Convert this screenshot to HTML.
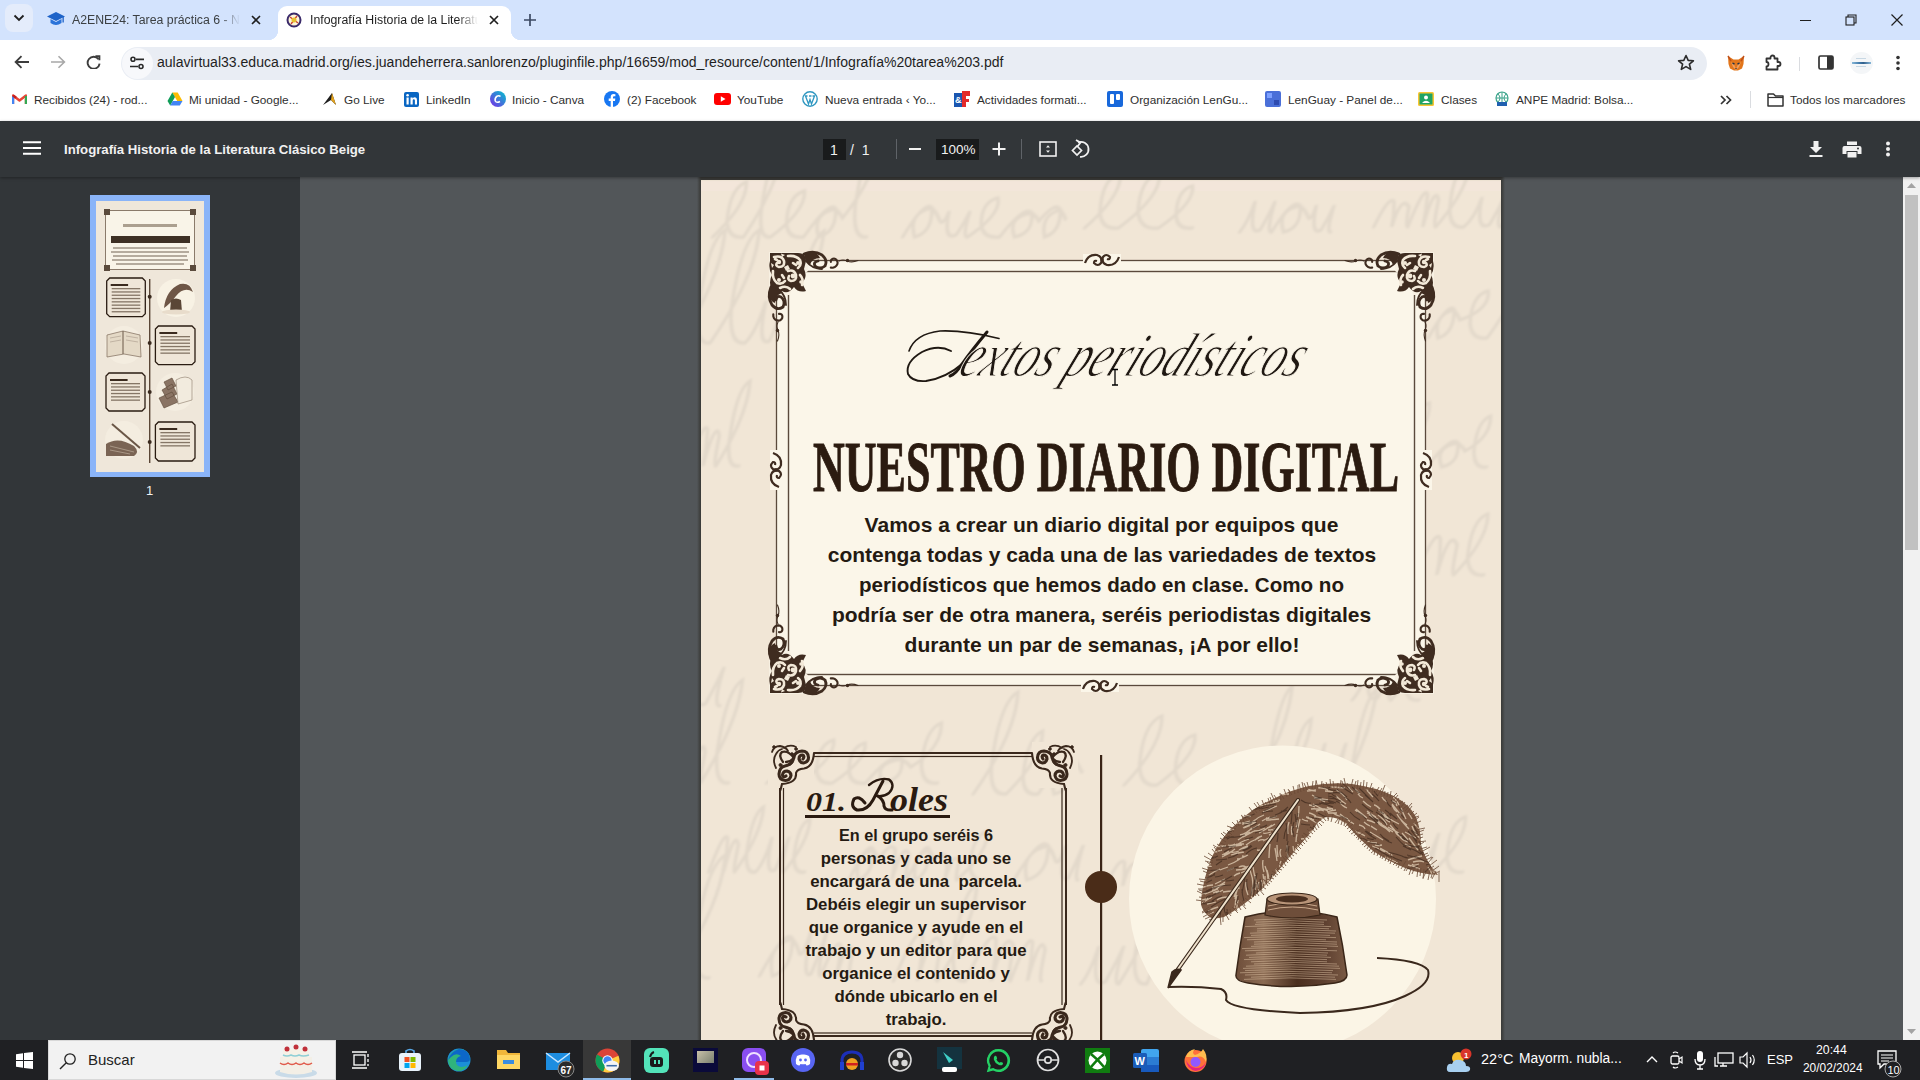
<!DOCTYPE html>
<html><head><meta charset="utf-8">
<style>
*{margin:0;padding:0;box-sizing:border-box}
html,body{width:1920px;height:1080px;overflow:hidden;font-family:"Liberation Sans",sans-serif;background:#525659}
.abs{position:absolute}
svg{display:block}
#tabs{position:absolute;left:0;top:0;width:1920px;height:40px;background:#d3e3fd}
#toolbar{position:absolute;left:0;top:40px;width:1920px;height:42px;background:#fff}
#bookmarks{position:absolute;left:0;top:82px;width:1920px;height:39px;background:#fff}
#pdfbar{position:absolute;left:0;top:121px;width:1920px;height:56px;background:#323639;z-index:2;box-shadow:0 1px 3px rgba(0,0,0,.35)}
#sidebar{position:absolute;left:0;top:177px;width:300px;height:863px;background:#323639}
#viewer{position:absolute;left:300px;top:177px;width:1603px;height:863px;background:#525659}
#scroll{position:absolute;left:1903px;top:177px;width:17px;height:863px;background:#f1f1f1}
#taskbar{position:absolute;left:0;top:1040px;width:1920px;height:40px;background:#1f2023;z-index:3}
.t{position:absolute;white-space:nowrap}
.bm{top:11px;font-size:11.8px;color:#2e2e2e}
</style></head><body>
<div id="tabs">
  <div class="abs" style="left:5px;top:4px;width:28px;height:28px;border-radius:8px;background:#e4ecfb"></div>
  <svg class="abs" style="left:13px;top:14px" width="12" height="8" viewBox="0 0 12 8"><path d="M1.5 1.5 L6 6 L10.5 1.5" stroke="#1f1f1f" stroke-width="1.8" fill="none"/></svg>
  <!-- tab1 -->
  <svg class="abs" style="left:47px;top:12px" width="18" height="15" viewBox="0 0 18 15"><path d="M9 0 L18 4.5 L9 9 L0 4.5Z" fill="#1e63c8"/><path d="M3.5 7 V11 Q9 15 14.5 11 V7 L9 10 Z" fill="#2a73d9"/><rect x="15.5" y="4.5" width="1.3" height="6" fill="#1e63c8"/></svg>
  <div class="t" style="left:72px;top:13px;font-size:12.3px;color:#3c4043;width:168px;overflow:hidden;-webkit-mask-image:linear-gradient(90deg,#000 88%,transparent)">A2ENE24: Tarea práctica 6 - Nivel</div>
  <svg class="abs" style="left:251px;top:15px" width="10" height="10" viewBox="0 0 10 10"><path d="M1 1L9 9M9 1L1 9" stroke="#1f1f1f" stroke-width="1.6"/></svg>
  <!-- active tab -->
  <div class="abs" style="left:278px;top:6px;width:233px;height:36px;background:#fff;border-radius:9px 9px 0 0"></div>
  <div class="abs" style="left:268px;top:30px;width:10px;height:10px;background:radial-gradient(circle at 0 0,#d3e3fd 10px,#fff 10.5px)"></div>
  <div class="abs" style="left:511px;top:30px;width:10px;height:10px;background:radial-gradient(circle at 100% 0,#d3e3fd 10px,#fff 10.5px)"></div>
  <svg class="abs" style="left:286px;top:12px" width="16" height="16" viewBox="0 0 16 16"><circle cx="8" cy="8" r="6.5" stroke="#3a2a6a" stroke-width="2" fill="#fff7d8"/><path d="M4 5 L12 11 M5 12 L11 4" stroke="#c43" stroke-width="1.4"/><circle cx="8" cy="8" r="2.5" fill="#e8c030"/></svg>
  <div class="t" style="left:310px;top:13px;font-size:12.3px;color:#1f1f1f;width:168px;overflow:hidden;-webkit-mask-image:linear-gradient(90deg,#000 88%,transparent)">Infografía Historia de la Literatura</div>
  <svg class="abs" style="left:489px;top:15px" width="10" height="10" viewBox="0 0 10 10"><path d="M1 1L9 9M9 1L1 9" stroke="#1f1f1f" stroke-width="1.7"/></svg>
  <svg class="abs" style="left:523px;top:13px" width="14" height="14" viewBox="0 0 14 14"><path d="M7 1V13M1 7H13" stroke="#3c4a63" stroke-width="1.7"/></svg>
  <!-- window controls -->
  <div class="abs" style="left:1800px;top:20px;width:11px;height:1px;background:#1f1f1f"></div>
  <svg class="abs" style="left:1845px;top:14px" width="12" height="12" viewBox="0 0 12 12"><rect x="1" y="3" width="8" height="8" stroke="#1f1f1f" fill="none" stroke-width="1.1"/><path d="M3 3V1H11V9H9" stroke="#1f1f1f" fill="none" stroke-width="1.1"/></svg>
  <svg class="abs" style="left:1891px;top:14px" width="12" height="12" viewBox="0 0 12 12"><path d="M0.5 0.5L11.5 11.5M11.5 0.5L0.5 11.5" stroke="#1f1f1f" stroke-width="1.2"/></svg>
</div>
<div id="toolbar">
  <svg class="abs" style="left:14px;top:15px" width="16" height="14" viewBox="0 0 16 14"><path d="M15 7H2M7.5 1.2L1.6 7L7.5 12.8" stroke="#3c3c3c" stroke-width="1.8" fill="none"/></svg>
  <svg class="abs" style="left:50px;top:15px" width="16" height="14" viewBox="0 0 16 14"><path d="M1 7H14M8.5 1.2L14.4 7L8.5 12.8" stroke="#a8a8a8" stroke-width="1.6" fill="none"/></svg>
  <svg class="abs" style="left:86px;top:15px" width="16" height="14" viewBox="0 0 16 14"><path d="M12.5 4.2 A6 6 0 1 0 13.6 8.6" stroke="#3c3c3c" stroke-width="1.9" fill="none"/><path d="M9.4 1.2H13.4V5.2" stroke="#3c3c3c" stroke-width="1.9" fill="none"/></svg>
  <div class="abs" style="left:121px;top:7px;width:1586px;height:33px;border-radius:17px;background:#e9edf4"></div>
  <div class="abs" style="left:122px;top:8px;width:31px;height:31px;border-radius:16px;background:#f7f8fb"></div>
  <svg class="abs" style="left:129px;top:16px" width="16" height="14" viewBox="0 0 16 14"><circle cx="4" cy="3.3" r="2" stroke="#2a2a2a" stroke-width="1.6" fill="none"/><path d="M7 3.3H15M1 10.5H9" stroke="#2a2a2a" stroke-width="1.7"/><circle cx="12" cy="10.5" r="2" stroke="#2a2a2a" stroke-width="1.6" fill="none"/></svg>
  <div class="t" style="left:157px;top:14px;font-size:14.05px;color:#1f1f1f">aulavirtual33.educa.madrid.org/ies.juandeherrera.sanlorenzo/pluginfile.php/16659/mod_resource/content/1/Infografía%20tarea%203.pdf</div>
  <svg class="abs" style="left:1677px;top:14px" width="18" height="18" viewBox="0 0 18 18"><path d="M9 1.5L11.2 6.4L16.4 6.8L12.4 10.2L13.7 15.4L9 12.6L4.3 15.4L5.6 10.2L1.6 6.8L6.8 6.4Z" stroke="#2c2c2c" stroke-width="1.6" fill="none" stroke-linejoin="round"/></svg>
  <svg class="abs" style="left:1727px;top:15px" width="18" height="16" viewBox="0 0 18 16"><path d="M1 1L6.5 4.5H11.5L17 1L16.5 9L15 13.5L11 15.5H7L3 13.5L1.5 9Z" fill="#e2761b"/><path d="M4 7L7 9.5L9 14L11 9.5L14 7L12 12L9 15L6 12Z" fill="#f0a060"/><path d="M5.5 8.2L7.5 9M12.5 8.2L10.5 9" stroke="#233447" stroke-width="1.4"/><path d="M8 13H10L9 14.2Z" fill="#233447"/><path d="M1 1L4 6M17 1L14 6" stroke="#c0511a" stroke-width="1.5"/></svg>
  <svg class="abs" style="left:1764px;top:14px" width="18" height="18" viewBox="0 0 18 18"><path d="M2.5 4.5H6.5V3.5A2 2 0 0 1 10.5 3.5V4.5H13.5V8H14.5A2 2 0 0 1 14.5 12H13.5V15.5H2.5V12.5Q4.5 12.5 4.5 10.25Q4.5 8 2.5 8Z" stroke="#333" stroke-width="1.8" fill="none" stroke-linejoin="round"/></svg>
  <div class="abs" style="left:1799px;top:17px;width:1px;height:14px;background:#dadce0"></div>
  <svg class="abs" style="left:1818px;top:15px" width="16" height="15" viewBox="0 0 16 15"><rect x="1" y="1" width="14" height="13" rx="1.5" stroke="#333" stroke-width="1.7" fill="none"/><rect x="9" y="1" width="6" height="13" fill="#333"/></svg>
  <div class="abs" style="left:1850px;top:12px;width:23px;height:22px;border-radius:50%;background:#f4f6f8"></div>
  <div class="abs" style="left:1852px;top:22px;width:19px;height:2px;background:linear-gradient(90deg,#7ab0d4,#2a6aa0 40%,#1d4f80 60%,#7ab0d4);opacity:.9"></div><div class="abs" style="left:1856px;top:18px;width:10px;height:1px;background:#c8d8e4"></div><div class="abs" style="left:1856px;top:26px;width:10px;height:1px;background:#c8d8e4"></div>
  <svg class="abs" style="left:1895px;top:15px" width="6" height="16" viewBox="0 0 6 16"><circle cx="3" cy="2.5" r="1.8" fill="#333"/><circle cx="3" cy="8" r="1.8" fill="#333"/><circle cx="3" cy="13.5" r="1.8" fill="#333"/></svg>
</div>
<div id="bookmarks">
  <svg class="abs" style="left:12px;top:11px" width="15" height="12" viewBox="0 0 15 12"><path d="M1 11V2.5L7.5 7.5L14 2.5V11" stroke="#ea4335" stroke-width="2.4" fill="none" stroke-linejoin="round"/><path d="M1 11V3" stroke="#4285f4" stroke-width="2.4"/><path d="M14 11V3" stroke="#34a853" stroke-width="2.4"/><path d="M1 2.5L4 4.8" stroke="#c5221f" stroke-width="2.4"/></svg>
  <div class="t bm" style="left:34px">Recibidos (24) - rod...</div>
  <svg class="abs" style="left:167px;top:10px" width="16" height="14" viewBox="0 0 16 14"><path d="M5.3 0.5H10.7L15.5 9H10.2Z" fill="#fbbc04"/><path d="M5.3 0.5L0.5 9L3.2 13.5L8 5Z" fill="#0f9d58"/><path d="M3.2 13.5H12.8L15.5 9H5.8Z" fill="#4285f4"/></svg>
  <div class="t bm" style="left:189px">Mi unidad - Google...</div>
  <svg class="abs" style="left:322px;top:10px" width="15" height="14" viewBox="0 0 15 14"><path d="M1 13L10 1L14 13L9 8Z" fill="#1f1f1f"/><path d="M9 8L14 13L10 1Z" fill="#e3a21a"/></svg>
  <div class="t bm" style="left:344px">Go Live</div>
  <svg class="abs" style="left:404px;top:10px" width="15" height="15" viewBox="0 0 15 15"><rect width="15" height="15" rx="2" fill="#0a66c2"/><rect x="2.5" y="5.5" width="2.2" height="7" fill="#fff"/><circle cx="3.6" cy="3.3" r="1.3" fill="#fff"/><path d="M6.5 12.5V5.5H8.6V6.6Q9.4 5.3 11 5.3Q13 5.4 13 8V12.5H10.9V8.6Q10.9 7.2 9.8 7.2Q8.7 7.2 8.7 8.6V12.5Z" fill="#fff"/></svg>
  <div class="t bm" style="left:426px">LinkedIn</div>
  <svg class="abs" style="left:490px;top:9px" width="16" height="16" viewBox="0 0 16 16"><defs><linearGradient id="cv" x1="0" y1="1" x2="1" y2="0"><stop offset="0" stop-color="#7d2ae8"/><stop offset="1" stop-color="#00c4cc"/></linearGradient></defs><circle cx="8" cy="8" r="8" fill="url(#cv)"/><path d="M10.5 5.5Q9 4 6.8 5.3Q4.5 7 5.3 10Q6.5 12.3 10 10.5" stroke="#fff" stroke-width="1.6" fill="none"/></svg>
  <div class="t bm" style="left:512px">Inicio - Canva</div>
  <svg class="abs" style="left:604px;top:9px" width="16" height="16" viewBox="0 0 16 16"><circle cx="8" cy="8" r="8" fill="#1877f2"/><path d="M9 16V10H11L11.3 7.6H9V6.2Q9 5.3 10 5.3H11.4V3.2Q10.6 3 9.6 3Q6.7 3 6.7 6V7.6H4.7V10H6.7V16Z" fill="#fff"/></svg>
  <div class="t bm" style="left:627px">(2) Facebook</div>
  <svg class="abs" style="left:714px;top:11px" width="17" height="12" viewBox="0 0 17 12"><rect width="17" height="12" rx="3" fill="#ff0000"/><path d="M6.8 3.2L11.5 6L6.8 8.8Z" fill="#fff"/></svg>
  <div class="t bm" style="left:737px">YouTube</div>
  <svg class="abs" style="left:802px;top:9px" width="16" height="16" viewBox="0 0 16 16"><circle cx="8" cy="8" r="7.2" stroke="#2f97c1" stroke-width="1.4" fill="#fff"/><path d="M3.5 5L6.5 13L8 8.5L9.5 13L12.5 5M3 5H5.5M7 5H9.5M10.5 5H13" stroke="#2f97c1" stroke-width="1.3" fill="none"/></svg>
  <div class="t bm" style="left:825px">Nueva entrada ‹ Yo...</div>
  <svg class="abs" style="left:954px;top:9px" width="16" height="16" viewBox="0 0 16 16"><rect x="0" y="0" width="16" height="16" fill="#fff"/><path d="M0 2H8V16H0Z" fill="#1a56b0"/><path d="M8 0H16V5H12V8H15V11H12V16H8Z" fill="#e32b2b"/><text x="1" y="12" font-size="9" fill="#fff" font-family="Liberation Sans" font-weight="bold">&amp;</text></svg>
  <div class="t bm" style="left:977px">Actividades formati...</div>
  <svg class="abs" style="left:1107px;top:9px" width="16" height="16" viewBox="0 0 16 16"><rect width="16" height="16" rx="2" fill="#1868db"/><rect x="3" y="3" width="4" height="10" rx="1" fill="#fff"/><rect x="9" y="3" width="4" height="6" rx="1" fill="#fff"/></svg>
  <div class="t bm" style="left:1130px">Organización LenGu...</div>
  <svg class="abs" style="left:1265px;top:9px" width="16" height="16" viewBox="0 0 16 16"><rect width="16" height="16" rx="2" fill="#4a6fd8"/><rect x="2" y="2" width="5" height="5" fill="#7da0ff"/><rect x="9" y="9" width="5" height="5" fill="#2d4ab0"/></svg>
  <div class="t bm" style="left:1288px">LenGuay - Panel de...</div>
  <svg class="abs" style="left:1418px;top:10px" width="16" height="14" viewBox="0 0 16 14"><rect width="16" height="14" rx="1.5" fill="#f9c633"/><rect x="1.5" y="1.5" width="13" height="11" fill="#20a464"/><circle cx="8" cy="5.5" r="2" fill="#fff"/><path d="M4 11Q8 6.5 12 11Z" fill="#fff"/></svg>
  <div class="t bm" style="left:1441px">Clases</div>
  <svg class="abs" style="left:1494px;top:9px" width="16" height="16" viewBox="0 0 16 16"><circle cx="8" cy="7" r="6" stroke="#3aa38a" stroke-width="1.2" fill="none"/><path d="M2 7H14M8 1V13M4 3Q8 7 4 11M12 3Q8 7 12 11" stroke="#3aa38a" stroke-width="1" fill="none"/><rect x="3" y="11" width="10" height="4" fill="#2060b0"/></svg>
  <div class="t bm" style="left:1516px">ANPE Madrid: Bolsa...</div>
  <svg class="abs" style="left:1720px;top:13px" width="12" height="10" viewBox="0 0 12 10"><path d="M1 1L5 5L1 9M6.5 1L10.5 5L6.5 9" stroke="#333" stroke-width="1.7" fill="none"/></svg>
  <div class="abs" style="left:1750px;top:9px;width:1px;height:17px;background:#dadce0"></div>
  <svg class="abs" style="left:1767px;top:10px" width="17" height="15" viewBox="0 0 17 15"><path d="M1 2H6.5L8.5 4H16V14H1Z" stroke="#333" stroke-width="1.5" fill="none" stroke-linejoin="round"/><path d="M1 5.5H16" stroke="#333" stroke-width="1.2"/></svg>
  <div class="t bm" style="left:1790px">Todos los marcadores</div>
</div>
<div id="pdfbar">
  <svg class="abs" style="left:23px;top:20px" width="18" height="14" viewBox="0 0 18 14"><path d="M0 1.2H18M0 7H18M0 12.8H18" stroke="#fff" stroke-width="2"/></svg>
  <div class="t" style="left:64px;top:21px;font-size:13.2px;font-weight:bold;color:#f1f1f1">Infografía Historia de la Literatura Clásico Beige</div>
  <div class="abs" style="left:823px;top:18px;width:23px;height:21px;background:#191b1c"></div>
  <div class="t" style="left:830px;top:21px;font-size:14px;color:#f1f1f1">1</div>
  <div class="t" style="left:850px;top:21px;font-size:14px;color:#f1f1f1">/&nbsp;&nbsp;1</div>
  <div class="abs" style="left:896px;top:18px;width:1px;height:20px;background:#5f6368"></div>
  <div class="abs" style="left:909px;top:27px;width:12px;height:2px;background:#f1f1f1"></div>
  <div class="abs" style="left:936px;top:18px;width:43px;height:21px;background:#191b1c"></div>
  <div class="t" style="left:941px;top:21px;font-size:13.5px;color:#f1f1f1">100%</div>
  <svg class="abs" style="left:992px;top:21px" width="14" height="14" viewBox="0 0 14 14"><path d="M7 0.5V13.5M0.5 7H13.5" stroke="#f1f1f1" stroke-width="2"/></svg>
  <div class="abs" style="left:1021px;top:18px;width:1px;height:20px;background:#5f6368"></div>
  <svg class="abs" style="left:1039px;top:20px" width="18" height="16" viewBox="0 0 18 16"><rect x="1" y="1" width="16" height="14" stroke="#f1f1f1" stroke-width="1.6" fill="none"/><path d="M7 6.5L9 4.2L11 6.5ZM7 9.5L9 11.8L11 9.5Z" fill="#f1f1f1"/></svg>
  <svg class="abs" style="left:1070px;top:138px;top:17px" width="22" height="22" viewBox="0 0 22 22"><path d="M8 4.5 A7.5 7.5 0 1 1 10 18.8" stroke="#f1f1f1" stroke-width="1.8" fill="none"/><path d="M6 2 L10.5 4.6 L7.5 8.5" stroke="#f1f1f1" stroke-width="1.8" fill="none"/><path d="M7 8 L11.5 12.5 L7 17 L2.5 12.5 Z" stroke="#f1f1f1" stroke-width="1.7" fill="none"/></svg>
  <svg class="abs" style="left:1808px;top:19px" width="16" height="18" viewBox="0 0 16 18"><path d="M5.5 1H10.5V7H14L8 13L2 7H5.5Z" fill="#f1f1f1"/><rect x="1.5" y="15" width="13" height="2" fill="#f1f1f1"/></svg>
  <svg class="abs" style="left:1842px;top:20px" width="20" height="17" viewBox="0 0 20 17"><rect x="5" y="0.5" width="10" height="3.5" fill="#f1f1f1"/><path d="M2.5 5H17.5Q19.5 5 19.5 7V13H15.5V10H4.5V13H0.5V7Q0.5 5 2.5 5Z" fill="#f1f1f1"/><rect x="5.5" y="11" width="9" height="5.5" fill="#f1f1f1"/><circle cx="16" cy="7.5" r="1" fill="#323639"/></svg>
  <svg class="abs" style="left:1885px;top:20px" width="6" height="16" viewBox="0 0 6 16"><circle cx="3" cy="2.5" r="2" fill="#f1f1f1"/><circle cx="3" cy="8" r="2" fill="#f1f1f1"/><circle cx="3" cy="13.5" r="2" fill="#f1f1f1"/></svg>
</div>
<div id="sidebar">
  <div class="abs" style="left:90px;top:18px;width:120px;height:282px;background:#8ab4f8"></div>
  <svg class="abs" style="left:96px;top:24px" width="108" height="271" viewBox="96 201 108 271">
<rect x="96" y="201" width="108" height="271" fill="#efe7da"/>
<rect x="105.5" y="210.5" width="89" height="59" fill="#f9f4e8" stroke="#8a7a6a" stroke-width="1"/>
<g fill="#5a4a3c"><rect x="104" y="209" width="6" height="6"/><rect x="190" y="209" width="6" height="6"/><rect x="104" y="265" width="6" height="6"/><rect x="190" y="265" width="6" height="6"/></g>
<rect x="123" y="224" width="54" height="3" fill="#8a7a6a" opacity=".7"/>
<rect x="111" y="236" width="79" height="7" fill="#3e3024"/>
<rect x="113" y="247.3" width="74" height="1.4" fill="#7a6a5a" opacity=".75"/><rect x="111" y="251.3" width="78" height="1.4" fill="#7a6a5a" opacity=".75"/><rect x="113" y="255.3" width="74" height="1.4" fill="#7a6a5a" opacity=".75"/><rect x="112" y="259.3" width="76" height="1.4" fill="#7a6a5a" opacity=".75"/><rect x="116" y="263.3" width="68" height="1.4" fill="#7a6a5a" opacity=".75"/>
<path d="M109.7 278 H142.3 L145.3 281 V313.7 L142.3 316.7 H109.7 L106.7 313.7 V281 Z" fill="#efe6d8" stroke="#2a1c12" stroke-width="1.3"/><rect x="110.7" y="284" width="17.4" height="2" fill="#3a2a1e"/><rect x="111.7" y="288.0" width="28.60000000000001" height="1.3" fill="#6a5a4a" opacity=".8"/><rect x="111.7" y="291.3" width="28.60000000000001" height="1.3" fill="#6a5a4a" opacity=".8"/><rect x="111.7" y="294.6" width="28.60000000000001" height="1.3" fill="#6a5a4a" opacity=".8"/><rect x="111.7" y="297.9" width="28.60000000000001" height="1.3" fill="#6a5a4a" opacity=".8"/><rect x="111.7" y="301.2" width="28.60000000000001" height="1.3" fill="#6a5a4a" opacity=".8"/><rect x="111.7" y="304.5" width="28.60000000000001" height="1.3" fill="#6a5a4a" opacity=".8"/><rect x="111.7" y="307.8" width="28.60000000000001" height="1.3" fill="#6a5a4a" opacity=".8"/><rect x="111.7" y="311.1" width="28.60000000000001" height="1.3" fill="#6a5a4a" opacity=".8"/>
<path d="M158.4 326 H192 L195 329 V361.7 L192 364.7 H158.4 L155.4 361.7 V329 Z" fill="#efe6d8" stroke="#2a1c12" stroke-width="1.3"/><rect x="159.4" y="332" width="17.8" height="2" fill="#3a2a1e"/><rect x="160.4" y="336.0" width="29.599999999999994" height="1.3" fill="#6a5a4a" opacity=".8"/><rect x="160.4" y="339.3" width="29.599999999999994" height="1.3" fill="#6a5a4a" opacity=".8"/><rect x="160.4" y="342.6" width="29.599999999999994" height="1.3" fill="#6a5a4a" opacity=".8"/><rect x="160.4" y="345.9" width="29.599999999999994" height="1.3" fill="#6a5a4a" opacity=".8"/><rect x="160.4" y="349.2" width="29.599999999999994" height="1.3" fill="#6a5a4a" opacity=".8"/><rect x="160.4" y="352.5" width="29.599999999999994" height="1.3" fill="#6a5a4a" opacity=".8"/>
<path d="M109 373 H142 L145 376 V408 L142 411 H109 L106 408 V376 Z" fill="#efe6d8" stroke="#2a1c12" stroke-width="1.3"/><rect x="110" y="379" width="17.6" height="2" fill="#3a2a1e"/><rect x="111" y="383.0" width="29" height="1.3" fill="#6a5a4a" opacity=".8"/><rect x="111" y="386.3" width="29" height="1.3" fill="#6a5a4a" opacity=".8"/><rect x="111" y="389.6" width="29" height="1.3" fill="#6a5a4a" opacity=".8"/><rect x="111" y="392.9" width="29" height="1.3" fill="#6a5a4a" opacity=".8"/><rect x="111" y="396.2" width="29" height="1.3" fill="#6a5a4a" opacity=".8"/><rect x="111" y="399.5" width="29" height="1.3" fill="#6a5a4a" opacity=".8"/>
<path d="M158.4 422 H192 L195 425 V458 L192 461 H158.4 L155.4 458 V425 Z" fill="#efe6d8" stroke="#2a1c12" stroke-width="1.3"/><rect x="159.4" y="428" width="17.8" height="2" fill="#3a2a1e"/><rect x="160.4" y="432.0" width="29.599999999999994" height="1.3" fill="#6a5a4a" opacity=".8"/><rect x="160.4" y="435.3" width="29.599999999999994" height="1.3" fill="#6a5a4a" opacity=".8"/><rect x="160.4" y="438.6" width="29.599999999999994" height="1.3" fill="#6a5a4a" opacity=".8"/><rect x="160.4" y="441.9" width="29.599999999999994" height="1.3" fill="#6a5a4a" opacity=".8"/><rect x="160.4" y="445.2" width="29.599999999999994" height="1.3" fill="#6a5a4a" opacity=".8"/>
<rect x="149" y="279" width="1.4" height="184" fill="#5a4636"/>
<g fill="#3a2a1e"><circle cx="149.7" cy="296.7" r="2"/><circle cx="149.7" cy="343" r="2"/><circle cx="149.7" cy="392" r="2"/><circle cx="149.7" cy="442" r="2"/></g>
<circle cx="176" cy="298" r="19" fill="#f8f2e4"/>
<path d="M164 308 Q166 290 180 284 Q190 282 193 292 Q184 286 176 296 Q170 304 164 308Z" fill="#6e5646"/>
<path d="M170 312 L171 300 Q176 297 181 300 L182 312 Z" fill="#5a4636"/><ellipse cx="176" cy="312" rx="14" ry="2.5" fill="#e8dccb"/>
<circle cx="124" cy="345" r="19" fill="#f4ede0"/>
<path d="M107 335 L123 331 L140 335 L141 357 L124 354 L107 357 Z" fill="#e4d9c6" stroke="#8a7868" stroke-width=".8"/><path d="M123 331 V354" stroke="#6a5848" stroke-width="1"/><path d="M110 338 L121 336 M110 342 L121 340 M126 336 L138 338 M126 340 L138 342" stroke="#a8988a" stroke-width=".6"/>
<circle cx="175" cy="392" r="19" fill="#f4ede0"/>
<path d="M159 398 L172 392 L178 402 L164 408 Z M162 390 L172 384 L177 394 L167 399 Z M164 382 L172 378 L176 386 L168 390Z" fill="#8a7464" stroke="#5a4636" stroke-width=".6"/>
<path d="M176 380 Q186 374 192 380 L192 400 L178 404 Z" fill="#f2ebde" stroke="#8a7868" stroke-width=".6"/>
<circle cx="124" cy="440" r="19" fill="#f4ede0"/>
<path d="M106 444 Q118 436 134 446 Q140 452 134 456 L106 456 Z" fill="#7a6454"/><path d="M112 424 L140 448" stroke="#6a5646" stroke-width="2"/><path d="M110 446 L134 452 M110 450 L130 454" stroke="#c8b8a6" stroke-width=".6"/>
</svg>
  <div class="t" style="left:146px;top:306px;font-size:13px;color:#f1f1f1">1</div>
</div>
<div id="viewer"></div>
<div id="scroll">
  <svg class="abs" style="left:4px;top:6px" width="9" height="5" viewBox="0 0 9 5"><path d="M0 5L4.5 0L9 5Z" fill="#a3a3a3"/></svg>
  <div class="abs" style="left:2px;top:18px;width:13px;height:355px;background:#c1c1c1"></div>
  <svg class="abs" style="left:4px;top:852px" width="9" height="5" viewBox="0 0 9 5"><path d="M0 0L4.5 5L9 0Z" fill="#a3a3a3"/></svg>
</div>

<div id="pageshadow" class="abs" style="left:697px;top:177px;width:808px;height:863px;background:linear-gradient(90deg,#525659 0,#3e3f3d 3px,#3a3a38 4px,#3a3a38 804px,#3e3f3d 805px,#525659 808px)"></div>
<div id="page" class="abs" style="left:701px;top:180px;width:800px;height:860px;background:#f1e6d6;overflow:hidden">
<svg class="abs" style="left:0;top:0" width="800" height="860" viewBox="701 180 800 860">
<defs>
  <g id="bigcorner" stroke="#3f2c20" fill="none" stroke-linecap="round">
<path d="M1 1 H40 V20 L26 30 L22 44 H1 Z" fill="#f7f0e2" stroke="none"/>
<path d="M2 2 H30 Q38 2 38 10 L36 18 Q40 26 34 32 L38 40 Q30 42 26 36 Q20 44 14 40 L4 42 Q0 30 4 24 Q0 18 2 10 Z" fill="#3f2c20" stroke="none"/>
<g stroke="#f3e9d8" fill="none" stroke-width="2.6" stroke-linecap="round">
<path d="M6 6 Q14 4 16 10 Q17 16 11 16 Q7 15 9 12"/>
<path d="M20 5 Q28 4 32 9 Q34 14 30 17"/>
<path d="M5 20 Q4 28 9 32 Q14 34 17 30"/>
<path d="M20 20 Q26 18 28 24 Q29 30 23 30 Q19 29 21 25"/>
<path d="M12 37 Q18 34 22 38"/>
<path d="M32 24 Q36 28 34 34"/>
<path d="M25 12 L28 14 M14 24 L16 27 M7 8 L9 9"/>
</g>
<g fill="#f3e9d8" stroke="none"><circle cx="11" cy="11" r="2.2"/><circle cx="25" cy="25" r="2.4"/><circle cx="30" cy="12" r="2"/><circle cx="11" cy="29" r="2"/><circle cx="33" cy="31" r="1.8"/><path d="M16 16 L20 14 L22 18 L18 20Z"/><path d="M3 12 L6 14 L4 17Z"/><path d="M13 2.5 L17 4 L14 6Z"/></g>



<path d="M36 3 Q46 -1 54 4 Q60 9 57 15 Q52 19 47 15 Q45 11 50 10" stroke-width="2.8"/>
<path d="M38 10 Q44 18 54 18" stroke-width="1.8"/>
<g fill="#3f2c20" stroke="none"><path d="M36 2 Q48 -2 52 7 Q44 7 42 14 Q36 10 36 2Z"/></g>
<path d="M62.9 10.9 L62.8 10.0 L63.1 9.1 L63.8 8.3 L64.8 7.8 L66.0 7.6 L67.3 8.0 L68.4 8.8 L69.2 10.1 L69.6 11.7 L69.3 13.4 L68.3 14.9 L66.8 16.1 L64.9 16.7 L62.8 16.6" stroke-width="2.1"/>
<path d="M71 10 Q75 8 79 10 Q84 12 90 9.5" stroke-width="1.1"/>
<circle cx="79.5" cy="9.5" r="1.7" fill="#3f2c20" stroke="none"/>
<path d="M3 36 Q-1 46 4 54 Q9 60 15 56 Q18 50 13 46 Q9 44 8 49" stroke-width="2.8"/>
<path d="M10 38 Q18 44 18 54" stroke-width="1.8"/>
<g fill="#3f2c20" stroke="none"><path d="M2 36 Q-2 48 7 52 Q7 44 14 42 Q10 36 2 36Z"/></g>
<path d="M11.0 62.9 L11.8 62.8 L12.7 63.0 L13.6 63.6 L14.2 64.5 L14.4 65.7 L14.2 67.0 L13.4 68.2 L12.2 69.2 L10.6 69.6 L8.9 69.4 L7.3 68.6 L6.0 67.2 L5.3 65.3 L5.3 63.2" stroke-width="2.1"/>
<path d="M10 71 Q8 75 10 79 Q12 84 9.5 90" stroke-width="1.1"/>
<circle cx="9.5" cy="79.5" r="1.7" fill="#3f2c20" stroke="none"/>
</g>
  <g id="swirl2" stroke="#3f2c20" fill="none">
    <path d="M-17 3 Q-14 -6 -5 -5 Q1 -3 -1 3 Q-4 7 -8 3 Q-8 0 -5 1" stroke-width="2.2"/>
    <path d="M17 -3 Q14 6 5 5 Q-1 3 1 -3 Q4 -7 8 -3 Q8 0 5 -1" stroke-width="2.2"/>
    <circle cx="0" cy="0" r="1.2" fill="#3f2c20"/>
  </g>
  <g id="smallcorner" stroke="#3a281c" fill="none" stroke-linecap="round">
    <path d="M35 19 Q37 16 34.5 15 Q31 15 31 19 Q32 23 35.5 23 Q40.5 22 40.5 17.5 Q40 11 34 11 Q27 11.5 26 17 Q25 22 22 24" stroke-width="3.1"/>
    <path d="M18 36 Q15 38 14.5 35 Q15 31 19 31 Q23 32 23 35.5 Q22 40.5 17.5 40.5 Q11 40 11 34 Q11.5 27 17 26 Q22 25 24 22" stroke-width="3.1"/>
    <path d="M46 13 Q45 27 36 28.5 Q29 29 28 33 Q29 43 14 44 L12.5 50" stroke-width="2.1"/>
    <path d="M15 22 Q10 15 14 12 Q20 10 26 18 Q22 22 18 22" stroke-width="2.3"/>
    <path d="M8 28 Q4 20 8 14 Q10 10 14 9 M4 12 Q6 6 12 6 Q18 7 20 11" stroke-width="1.8"/>
    <path d="M16 8 Q22 4 28 7" stroke-width="1.8"/>
    <circle cx="6" cy="7" r="1.3" fill="#3a281c"/><circle cx="28" cy="9" r="1.3" fill="#3a281c"/><circle cx="12.5" cy="25" r="1.5" fill="#3a281c"/><circle cx="24" cy="14" r="1.3" fill="#3a281c"/>
  </g>
</defs>
<!-- faint handwriting background -->
<rect x="701" y="181" width="800" height="10" fill="#f4e6de" opacity=".55"/>
<filter id="hblur" x="-5%" y="-5%" width="110%" height="110%"><feGaussianBlur stdDeviation="0.9"/></filter>
<path filter="url(#hblur)" transform="skewX(-12) translate(60,0)" d="M703 237 Q731 204 725 182 Q710 188 714 221 Q719 239 734 237 Q758 184 754 148 Q742 157 746 210 Q749 239 761 237 Q791 210 785 191 Q769 196 774 223 Q778 239 794 237 Q812 200 820 209 Q826 232 809 237 Q797 214 820 209 Q826 214 829 218 Q854 176 849 135 Q835 145 839 206 Q843 239 857 237 M893 237 Q908 199 916 208 Q922 232 905 237 Q893 213 916 208 Q922 213 925 218 Q931 229 934 211 Q934 241 946 235 Q952 222 955 211 Q952 237 958 237 Q987 214 980 198 Q964 202 969 225 Q974 239 990 237 Q1008 205 1017 213 Q1023 233 1005 237 Q993 217 1017 213 Q1023 217 1026 221 Q1038 201 1045 210 Q1050 232 1035 237 Q1026 215 1045 210 Q1050 215 1052 219 M1073 228 Q1104 195 1097 173 Q1080 178 1085 212 Q1090 230 1107 228 Q1144 195 1136 173 Q1118 178 1123 212 Q1129 230 1147 228 Q1178 203 1172 186 Q1157 190 1162 216 Q1166 230 1181 228 M1229 232 Q1235 223 1238 201 Q1238 236 1249 230 Q1255 214 1258 201 Q1255 232 1261 232 Q1275 197 1284 206 Q1290 228 1273 232 Q1261 210 1284 206 Q1290 210 1293 215 Q1298 225 1300 205 Q1300 236 1310 230 Q1315 217 1318 205 Q1315 232 1320 232 M1362 227 Q1371 194 1377 202 Q1380 215 1380 227 Q1383 194 1393 207 Q1393 227 1396 227 Q1404 184 1409 195 Q1411 211 1411 227 Q1414 184 1421 200 Q1421 227 1424 227 Q1449 188 1444 163 Q1429 169 1434 208 Q1438 229 1452 227 Q1461 218 1464 197 Q1464 231 1477 225 Q1483 210 1486 197 Q1483 227 1489 227 Q1494 219 1497 198 Q1497 231 1507 225 Q1513 210 1515 198 Q1513 227 1518 227 M693 343 Q720 275 714 230 Q699 241 704 309 Q708 345 723 343 Q755 275 748 230 Q732 241 737 309 Q742 345 758 343 Q767 331 770 301 Q770 347 782 341 Q787 319 790 301 Q787 343 793 343 Q818 276 813 231 Q799 242 803 309 Q807 345 821 343 Q834 302 841 312 Q844 328 844 343 Q848 302 858 317 Q858 343 862 343 M1440 338 Q1453 301 1460 310 Q1465 333 1450 338 Q1440 315 1460 310 Q1465 315 1468 320 Q1496 309 1490 291 Q1474 295 1479 324 Q1484 340 1499 338 Q1526 285 1521 250 Q1508 259 1512 312 Q1516 340 1529 338 Q1537 329 1540 307 Q1540 342 1552 336 Q1557 320 1560 307 Q1557 338 1563 338 M700 466 Q705 455 707 428 Q707 470 717 464 Q722 445 724 428 Q722 466 727 466 Q734 418 739 430 Q742 448 742 466 Q745 418 752 436 Q752 466 755 466 Q776 415 771 381 Q759 389 763 441 Q766 468 778 466 M1430 467 Q1462 428 1455 403 Q1437 409 1443 448 Q1448 469 1466 467 Q1484 435 1492 443 Q1498 463 1481 467 Q1469 447 1492 443 Q1498 447 1501 451 Q1524 437 1519 416 Q1506 421 1510 452 Q1514 469 1526 467 M692 592 Q711 552 707 526 Q696 532 699 572 Q702 594 713 592 Q722 534 727 548 Q729 570 729 592 Q732 534 739 556 Q739 592 741 592 M1442 575 Q1452 529 1459 540 Q1462 558 1462 575 Q1465 529 1475 546 Q1475 575 1478 575 Q1488 527 1495 539 Q1499 557 1499 575 Q1502 527 1513 545 Q1513 575 1516 575 Q1543 538 1537 514 Q1522 520 1526 557 Q1531 577 1546 575 M698 706 Q706 669 712 678 Q714 692 714 706 Q717 669 725 683 Q725 706 728 706 Q747 671 758 680 Q765 701 743 706 Q728 684 758 680 Q765 684 769 688 Q776 695 780 667 Q780 710 795 704 Q802 684 806 667 Q802 706 810 706 M1441 700 Q1449 689 1452 660 Q1452 704 1466 698 Q1473 677 1477 660 Q1473 700 1480 700 Q1505 662 1500 637 Q1486 643 1490 681 Q1494 702 1508 700 M720 783 Q741 753 736 732 Q724 737 728 768 Q731 785 743 783 Q775 743 769 717 Q752 723 757 763 Q762 785 779 783 Q789 733 794 746 Q796 764 796 783 Q798 733 805 752 Q805 783 807 783 Q832 721 827 680 Q813 690 817 752 Q821 785 835 783 M873 783 Q903 759 897 743 Q880 747 885 771 Q890 785 906 783 Q937 757 931 740 Q916 744 920 770 Q925 785 939 783 Q969 759 963 743 Q948 747 953 771 Q957 785 972 783 Q992 751 1003 759 Q1010 779 989 783 Q975 763 1003 759 Q1010 763 1014 767 Q1041 747 1035 723 Q1020 729 1024 765 Q1029 785 1044 783 M1082 794 Q1112 733 1105 692 Q1089 702 1094 764 Q1098 796 1115 794 Q1144 757 1138 731 Q1124 738 1128 776 Q1132 796 1147 794 Q1166 749 1176 760 Q1182 789 1163 794 Q1149 766 1176 760 Q1182 766 1186 772 M1231 785 Q1261 744 1254 716 Q1237 723 1242 764 Q1247 787 1264 785 Q1298 755 1291 735 Q1274 740 1279 770 Q1284 787 1302 785 M1336 798 Q1348 749 1356 761 Q1360 792 1346 798 Q1336 767 1356 761 Q1360 767 1363 773 Q1383 731 1378 686 Q1367 697 1371 764 Q1374 800 1385 798 Q1409 750 1404 719 Q1392 727 1396 774 Q1399 800 1411 798 Q1420 782 1423 743 Q1423 802 1435 796 Q1441 766 1444 743 Q1441 798 1447 798 Q1468 732 1463 689 Q1452 700 1455 765 Q1459 800 1470 798 M714 887 Q723 840 729 852 Q732 869 732 887 Q736 840 745 858 Q745 887 748 887 Q771 836 766 802 Q753 811 757 862 Q761 889 773 887 Q799 825 794 784 Q781 794 785 856 Q789 889 801 887 M834 872 Q841 828 846 839 Q849 856 849 872 Q851 828 858 845 Q858 872 860 872 Q879 833 875 807 Q865 814 868 853 Q871 874 881 872 Q888 862 890 837 Q890 876 900 870 Q904 852 907 837 Q904 872 909 872 Q928 840 924 819 Q913 824 916 856 Q919 874 930 872 M976 880 Q987 839 994 850 Q999 875 985 880 Q976 855 994 850 Q999 855 1001 860 Q1010 840 1016 850 Q1019 865 1019 880 Q1022 840 1031 855 Q1031 880 1034 880 Q1044 839 1050 850 Q1054 875 1042 880 Q1034 855 1050 850 Q1054 855 1057 860 Q1064 850 1069 858 Q1072 869 1072 880 Q1074 850 1082 861 Q1082 880 1084 880 Q1110 851 1104 831 Q1090 836 1094 866 Q1099 882 1113 880 M1141 880 Q1158 835 1168 846 Q1174 874 1154 880 Q1141 852 1168 846 Q1174 852 1177 858 Q1183 870 1185 845 Q1185 884 1195 878 Q1200 860 1203 845 Q1200 880 1205 880 M1234 886 Q1242 855 1248 863 Q1251 875 1251 886 Q1253 855 1262 867 Q1262 886 1265 886 Q1269 878 1271 857 Q1271 890 1279 884 Q1283 870 1285 857 Q1283 886 1287 886 M1308 876 Q1338 844 1331 822 Q1315 828 1320 860 Q1325 878 1341 876 Q1352 830 1357 842 Q1359 859 1359 876 Q1361 830 1369 848 Q1369 876 1371 876 Q1397 811 1391 767 Q1377 778 1381 844 Q1385 878 1400 876 Q1425 841 1420 817 Q1407 823 1411 859 Q1415 878 1427 876 Q1438 834 1443 845 Q1446 861 1446 876 Q1448 834 1456 850 Q1456 876 1459 876 M1495 872 Q1524 837 1517 813 Q1501 819 1506 854 Q1511 874 1527 872 Q1535 861 1538 833 Q1538 876 1548 870 Q1553 850 1556 833 Q1553 872 1558 872 Q1585 839 1579 817 Q1564 822 1569 856 Q1573 874 1588 872 M702 978 Q737 940 729 915 Q710 921 716 959 Q722 980 741 978 Q776 911 769 867 Q752 878 757 945 Q762 980 780 978 Q816 940 809 914 Q791 921 796 959 Q802 980 820 978 Q854 904 847 855 Q830 867 835 941 Q841 980 857 978 M907 976 Q923 927 932 939 Q938 969 920 976 Q907 945 932 939 Q938 945 941 951 Q946 963 949 930 Q949 980 958 974 Q963 950 965 930 Q963 976 968 976 Q976 936 982 946 Q984 961 984 976 Q987 936 995 951 Q995 976 998 976 M1042 981 Q1054 922 1062 937 Q1066 959 1066 981 Q1070 922 1082 944 Q1082 981 1086 981 Q1111 923 1105 884 Q1091 893 1096 952 Q1100 983 1114 981 Q1128 926 1136 940 Q1140 961 1140 981 Q1143 926 1155 947 Q1155 981 1159 981 Q1167 931 1173 943 Q1176 962 1176 981 Q1179 931 1187 950 Q1187 981 1190 981 M1230 984 Q1237 973 1240 946 Q1240 988 1254 982 Q1261 962 1265 946 Q1261 984 1268 984 Q1293 925 1287 885 Q1274 895 1278 955 Q1282 986 1296 984 Q1306 928 1312 942 Q1315 963 1315 984 Q1317 928 1325 949 Q1325 984 1328 984 Q1356 943 1350 915 Q1334 922 1339 964 Q1344 986 1360 984 Q1386 950 1381 927 Q1368 932 1372 967 Q1376 986 1389 984 M1418 978 Q1438 920 1433 881 Q1422 891 1426 949 Q1429 980 1440 978 Q1461 940 1457 915 Q1447 921 1450 959 Q1453 980 1463 978 Q1488 920 1483 881 Q1470 891 1474 949 Q1478 980 1490 978" stroke="#e3d9cb" stroke-width="3.4" fill="none" stroke-linecap="round"/>
<!-- main frame -->
<rect x="776" y="260" width="650" height="426" fill="#fbf6e9"/>
<rect x="776.5" y="260.5" width="649" height="425" fill="none" stroke="#5b4a3c" stroke-width="1.3"/>
<rect x="788.5" y="271.5" width="626" height="403" fill="none" stroke="#5b4a3c" stroke-width="1.4"/>
<use href="#bigcorner" transform="translate(768,251)"/>
<use href="#bigcorner" transform="translate(1435,251) scale(-1,1)"/>
<use href="#bigcorner" transform="translate(768,695) scale(1,-1)"/>
<use href="#bigcorner" transform="translate(1435,695) scale(-1,-1)"/>
<rect x="1083" y="254" width="38" height="12" fill="#fbf6e9"/>
<use href="#swirl2" transform="translate(1102,260)"/>
<rect x="1081" y="680" width="38" height="12" fill="#fbf6e9"/>
<use href="#swirl2" transform="translate(1100,686)"/>
<rect x="770" y="450" width="12" height="40" fill="#fbf6e9"/>
<use href="#swirl2" transform="translate(776,470) rotate(90)"/>
<rect x="1420" y="450" width="12" height="40" fill="#fbf6e9"/>
<use href="#swirl2" transform="translate(1426,470) rotate(90)"/>
<!-- script title -->
<g stroke="#1f1812" fill="none" stroke-linecap="round">
  <path d="M909 351 Q915 334 940 331 Q965 330 999 338.5" stroke-width="1.6"/>
  <path d="M987 332 Q972 350 962 364 Q956 374 950 376" stroke-width="3"/>
  <path d="M951 351 Q938 344 922 352 Q905 362 908 374 Q912 382 926 381 Q946 378 962 364" stroke-width="1.9"/>
</g>
<text x="956" y="376" font-family="Liberation Serif" font-style="italic" font-size="62" fill="#1f1812" stroke="#fbf6e9" stroke-width="1.1" textLength="341" lengthAdjust="spacingAndGlyphs" transform="translate(175.3,0) skewX(-25)">extos periodísticos</text>
<text x="813" y="490.5" font-family="Liberation Serif" font-weight="bold" font-size="72.5" fill="#2b1b10" stroke="#2b1b10" stroke-width="1" textLength="586" lengthAdjust="spacingAndGlyphs">NUESTRO DIARIO DIGITAL</text>
<g font-family="Liberation Sans" font-weight="bold" font-size="21" fill="#241a12" text-anchor="middle">
  <text x="1101.5" y="532">Vamos a crear un diario digital por equipos que</text>
  <text x="1102" y="562">contenga todas y cada una de las variedades de textos</text>
  <text x="1101.5" y="592" textLength="485" lengthAdjust="spacingAndGlyphs">periodísticos que hemos dado en clase. Como no</text>
  <text x="1101.5" y="622">podría ser de otra manera, seréis periodistas digitales</text>
  <text x="1102" y="652">durante un par de semanas, ¡A por ello!</text>
</g>
<path d="M1112 369.5 H1118 M1115 369.5 V385 M1112 385 H1118" stroke="#000" stroke-width="1.3" fill="none"/>
<!-- roles box -->
<rect x="780" y="753" width="286" height="283" fill="none" stroke="#3a281c" stroke-width="2"/>
<rect x="783.5" y="756.5" width="278.5" height="276.5" fill="none" stroke="#3a281c" stroke-width="1.2"/>
<rect x="768" y="742" width="46" height="46" fill="#f1e6d6"/>
<use href="#smallcorner" transform="translate(768,740)"/>
<rect x="1032" y="742" width="46" height="46" fill="#f1e6d6"/>
<use href="#smallcorner" transform="translate(1078,740) scale(-1,1)"/>
<rect x="768" y="1005" width="46" height="46" fill="#f1e6d6"/>
<use href="#smallcorner" transform="translate(768,1053) scale(1,-1)"/>
<rect x="1032" y="1005" width="46" height="46" fill="#f1e6d6"/>
<use href="#smallcorner" transform="translate(1078,1053) scale(-1,-1)"/>
<text x="806" y="810.5" font-family="Liberation Serif" font-weight="bold" font-style="italic" font-size="27" fill="#2a1a10" textLength="40" lengthAdjust="spacingAndGlyphs">01.</text>
<g stroke="#2a1a10" fill="none" stroke-linecap="round">
<path d="M865 803 Q859 795 854 799 Q850 807 857 810 Q867 811 873 800 L883 781" stroke-width="3"/>
<path d="M869 785 Q879 777 889 779.5 Q896 785 889 793 Q884 797 877 796" stroke-width="2.4"/>
<path d="M878 796 Q884 800 884 806 Q885 810.5 892 810" stroke-width="3"/>
</g>
<text x="890" y="810.5" font-family="Liberation Serif" font-style="italic" font-weight="bold" font-size="33" fill="#2a1a10" textLength="58" lengthAdjust="spacingAndGlyphs">oles</text>
<rect x="805" y="815" width="145" height="3" fill="#2a1a10"/>
<g font-family="Liberation Sans" font-weight="bold" font-size="16.8" fill="#241a12" text-anchor="middle">
  <text x="916" y="841" textLength="154" lengthAdjust="spacingAndGlyphs">En el grupo seréis 6</text>
  <text x="916" y="864">personas y cada uno se</text>
  <text x="916" y="887">encargará de una&#160; parcela.</text>
  <text x="916" y="910">Debéis elegir un supervisor</text>
  <text x="916" y="933">que organice y ayude en el</text>
  <text x="916" y="956">trabajo y un editor para que</text>
  <text x="916" y="979">organice el contenido y</text>
  <text x="916" y="1002">dónde ubicarlo en el</text>
  <text x="916" y="1025">trabajo.</text>
</g>
<!-- timeline -->
<rect x="1100" y="755" width="2.2" height="300" fill="#3a2416"/>
<circle cx="1101" cy="887" r="16" fill="#4a2c18"/>
<!-- circle illustration -->
<circle cx="1282.5" cy="899" r="153.5" fill="#fbf5e6"/>
<!-- ink line -->
<path d="M1168 987 Q1195 986 1221 989 Q1228 992 1226 1000 Q1232 1010 1300 1013 Q1370 1012 1405 996 Q1432 984 1428 970 Q1420 960 1377 958" stroke="#3a281c" stroke-width="2" fill="none"/>
<!-- inkwell -->
<defs><linearGradient id="inkg" x1="0" x2="1" y1="0" y2="0"><stop offset="0" stop-color="#6e4e3a"/><stop offset=".25" stop-color="#8a6a52"/><stop offset=".55" stop-color="#4a2e1e"/><stop offset=".8" stop-color="#5e4030"/><stop offset="1" stop-color="#7a5a44"/></linearGradient></defs>
<path d="M1245 917 Q1291 905 1337 917 Q1343 945 1347 975 Q1347 981 1335 983 Q1291 990 1248 983 Q1235 981 1236 975 Q1240 945 1245 917 Z" fill="url(#inkg)"/>
<path d="M1254 920.0Q1290 917.0 1327 920.0M1256 922.2Q1290 919.2 1324 922.2M1255 924.4Q1290 921.4 1324 924.4M1245 926.6Q1288 923.6 1331 926.6M1257 928.8Q1293 925.8 1329 928.8M1257 931.0Q1297 928.0 1336 931.0M1250 933.2Q1293 930.2 1335 933.2M1251 935.4Q1291 932.4 1330 935.4M1244 937.6Q1290 934.6 1336 937.6M1247 939.8Q1287 936.8 1326 939.8M1254 942.0Q1295 939.0 1337 942.0M1254 944.2Q1296 941.2 1337 944.2M1251 946.4Q1294 943.4 1338 946.4M1242 948.6Q1285 945.6 1327 948.6M1245 950.8Q1291 947.8 1337 950.8M1256 953.0Q1292 950.0 1328 953.0M1246 955.2Q1286 952.2 1327 955.2M1249 957.4Q1290 954.4 1331 957.4M1244 959.6Q1286 956.6 1327 959.6M1251 961.8Q1289 958.8 1327 961.8M1254 964.0Q1295 961.0 1337 964.0M1246 966.2Q1292 963.2 1339 966.2M1243 968.4Q1292 965.4 1340 968.4M1245 970.6Q1289 967.6 1333 970.6M1240 972.8Q1286 969.8 1332 972.8M1245 975.0Q1291 972.0 1338 975.0M1251 977.2Q1293 974.2 1335 977.2M1244 979.4Q1290 976.4 1336 979.4" stroke="#e0c6a8" stroke-width="0.9" fill="none" opacity=".55"/>
<path d="M1236 975 Q1240 945 1245 917 Q1291 905 1337 917 Q1343 945 1347 975 Q1347 981 1335 983 Q1291 990 1248 983 Q1235 981 1236 975Z" stroke="#3a2618" stroke-width="1.5" fill="none"/>
<path d="M1265 915 L1267 899 Q1292 893 1318 899 L1320 915 Q1292 921 1265 915 Z" fill="#6e4e3a" stroke="#3a2618" stroke-width="1.2"/>
<path d="M1268 906 Q1292 900 1317 906 M1268 910 Q1292 904 1318 910" stroke="#caa98c" stroke-width="1" fill="none"/>
<ellipse cx="1292" cy="899" rx="25" ry="6" fill="#b89478" stroke="#3a2618" stroke-width="1.2"/>
<ellipse cx="1292" cy="899" rx="16" ry="3.5" fill="#4a3020"/>
<!-- feather -->
<clipPath id="fclip"><path d="M1213 919 Q1200 912 1201 900 Q1203 880 1211 859 Q1220 838 1235 825 Q1252 808 1271 800 Q1290 790 1309 786 Q1330 782 1352 784 Q1375 787 1394 796 Q1410 805 1416 817 Q1421 830 1421 845 Q1426 862 1438 875 Q1420 874 1405 868 Q1388 861 1373 851 Q1358 838 1345 823 Q1336 816 1326 817 Q1318 820 1313 830 Q1300 845 1288 859 Q1275 875 1262 889 Q1245 905 1224 917 Z"/></clipPath>
<path d="M1213 919 Q1200 912 1201 900 Q1203 880 1211 859 Q1220 838 1235 825 Q1252 808 1271 800 Q1290 790 1309 786 Q1330 782 1352 784 Q1375 787 1394 796 Q1410 805 1416 817 Q1421 830 1421 845 Q1426 862 1438 875 Q1420 874 1405 868 Q1388 861 1373 851 Q1358 838 1345 823 Q1336 816 1326 817 Q1318 820 1313 830 Q1300 845 1288 859 Q1275 875 1262 889 Q1245 905 1224 917 Z" fill="#7a5842"/>
<g clip-path="url(#fclip)">
<path d="M1244 852Q1236 853 1231 855M1432 872Q1433 871 1439 869M1310 819Q1318 824 1324 827M1255 820Q1249 825 1243 828M1382 797Q1383 800 1387 802M1246 882Q1245 888 1248 895M1251 816Q1246 815 1242 818M1340 814Q1344 818 1348 819M1412 864Q1413 866 1419 864M1347 819Q1349 821 1354 824M1409 838Q1414 845 1418 850M1255 878Q1257 883 1255 890M1272 875Q1274 879 1273 883M1241 843Q1237 845 1233 847M1248 847Q1245 849 1242 849M1265 828Q1260 831 1254 831M1356 809Q1362 814 1367 818M1390 825Q1394 829 1399 836M1392 804Q1395 808 1401 815M1248 855Q1241 859 1237 859M1366 789Q1371 795 1373 797M1314 798Q1322 799 1328 800M1246 867Q1243 865 1239 867M1229 851Q1226 853 1222 855M1384 826Q1388 829 1393 832M1244 844Q1237 843 1234 846M1262 836Q1258 837 1255 840M1214 912Q1209 914 1204 916M1268 880Q1267 882 1269 886M1218 907Q1214 908 1208 911M1228 867Q1222 869 1220 870M1265 876Q1265 883 1265 888M1265 840Q1262 839 1258 841M1315 809Q1323 808 1328 810M1289 794Q1284 794 1282 795M1364 822Q1366 824 1370 826M1367 820Q1372 821 1375 823M1220 869Q1215 871 1209 875M1301 839Q1310 838 1315 838M1249 839Q1240 842 1235 846M1267 804Q1263 806 1259 806M1316 811Q1325 809 1331 809M1324 818Q1328 820 1335 825M1277 816Q1272 819 1266 818M1275 824Q1271 827 1267 828M1250 866Q1245 867 1241 870M1238 887Q1236 893 1235 899M1401 808Q1402 811 1406 819M1287 845Q1287 854 1289 860M1248 846Q1244 847 1239 850M1263 860Q1262 866 1264 872M1380 848Q1388 852 1393 856M1380 823Q1382 825 1386 827M1253 885Q1251 893 1252 900M1272 825Q1267 829 1259 833M1250 821Q1241 824 1235 823M1313 804Q1319 808 1328 811M1225 882Q1220 886 1212 888M1307 791Q1312 790 1316 791M1255 822Q1248 823 1242 824M1211 864Q1208 864 1203 868M1306 817Q1311 818 1312 819M1235 844Q1231 846 1228 845M1402 833Q1404 835 1408 840M1249 834Q1243 836 1238 840M1412 826Q1413 830 1417 835M1297 834Q1296 838 1296 842M1408 813Q1410 815 1412 819M1292 826Q1291 830 1292 835M1240 873Q1236 874 1234 876M1263 874Q1264 881 1264 884M1300 819Q1298 828 1297 833M1233 851Q1230 852 1224 855M1255 875Q1255 878 1256 881M1328 813Q1331 813 1337 813M1225 879Q1221 881 1215 884M1401 820Q1406 826 1409 829M1392 801Q1396 802 1397 806M1234 868Q1231 869 1227 871M1414 823Q1417 828 1420 829M1374 805Q1376 805 1380 809M1381 823Q1382 827 1386 827M1369 815Q1372 816 1374 819M1395 831Q1397 836 1402 837M1378 810Q1383 813 1386 818M1234 829Q1231 830 1229 831M1277 806Q1269 809 1263 812M1355 810Q1362 815 1367 818M1336 796Q1341 801 1346 804M1216 902Q1213 903 1207 904M1267 870Q1269 876 1269 881M1385 857Q1390 859 1398 863M1250 868Q1242 870 1236 870M1276 868Q1277 873 1277 880M1298 844Q1297 852 1298 859M1339 820Q1344 823 1347 824M1308 789Q1312 791 1316 790M1259 838Q1251 841 1246 845M1250 832Q1247 833 1242 837M1378 815Q1384 819 1387 825M1204 900Q1194 901 1189 902M1237 895Q1235 901 1235 908M1432 870Q1433 871 1436 875M1417 835Q1421 840 1426 845M1212 897Q1207 900 1202 903M1275 848Q1276 853 1277 861M1289 822Q1287 828 1288 834M1297 820Q1298 825 1296 827M1218 889Q1211 892 1205 894M1228 897Q1221 897 1217 900M1225 884Q1219 886 1215 890M1284 863Q1284 869 1284 873M1367 813Q1373 815 1379 820M1418 844Q1422 845 1424 850M1223 890Q1220 892 1216 893M1264 815Q1258 817 1254 821M1238 900Q1237 907 1236 912M1386 816Q1392 821 1399 824M1309 832Q1316 835 1323 837M1325 791Q1329 791 1333 792M1400 837Q1402 840 1408 842M1309 813Q1311 813 1316 816M1388 827Q1393 830 1399 833M1256 822Q1250 826 1244 828M1219 887Q1215 891 1212 890M1233 891Q1229 891 1223 892M1309 832Q1315 830 1318 831M1239 851Q1233 853 1230 852M1340 802Q1342 806 1347 808M1222 850Q1218 851 1210 854M1392 805Q1394 810 1397 812M1355 789Q1359 793 1360 794M1428 867Q1431 872 1435 879M1327 807Q1328 808 1333 809M1226 846Q1216 846 1211 848M1367 841Q1372 843 1377 843M1348 786Q1349 789 1353 792M1312 795Q1319 799 1325 802M1299 823Q1298 829 1297 833M1378 821Q1384 827 1390 832M1384 816Q1386 821 1390 822M1272 877Q1271 883 1270 891M1263 848Q1262 851 1257 850M1253 867Q1254 874 1256 882M1254 831Q1247 835 1243 837M1277 845Q1277 851 1278 857M1270 817Q1267 818 1262 821M1242 845Q1234 846 1229 847M1281 861Q1279 865 1280 867M1261 880Q1263 884 1262 891M1318 788Q1323 787 1328 790M1279 801Q1271 803 1265 805M1211 898Q1202 899 1197 903M1248 870Q1245 871 1241 873M1293 846Q1293 852 1296 858M1413 862Q1421 860 1424 862M1370 832Q1375 835 1383 840M1279 819Q1271 820 1266 820M1236 890Q1236 892 1234 897M1299 806Q1299 813 1298 817M1405 832Q1409 834 1416 838M1314 817Q1320 816 1325 820M1270 844Q1269 852 1269 858M1296 847Q1294 855 1296 863M1363 801Q1367 805 1371 807M1271 832Q1265 834 1263 833M1280 800Q1275 801 1273 801M1250 870Q1253 878 1253 885M1375 845Q1377 846 1382 845M1355 831Q1360 833 1362 834M1356 832Q1361 833 1365 836M1260 824Q1256 827 1248 831M1382 812Q1385 814 1388 819M1302 819Q1305 821 1308 821M1219 891Q1215 892 1213 893M1408 860Q1413 858 1422 856M1335 819Q1341 823 1344 824M1247 855Q1246 857 1242 856M1371 826Q1372 827 1377 830M1276 832Q1273 834 1269 835M1377 822Q1381 826 1385 828M1393 797Q1398 802 1399 805M1259 882Q1257 885 1259 891M1281 849Q1279 852 1281 857M1213 885Q1208 885 1201 888M1240 859Q1234 863 1228 865M1307 818Q1310 819 1314 820M1372 846Q1378 848 1385 852M1359 825Q1364 826 1365 829M1336 790Q1343 793 1347 800M1311 809Q1317 808 1324 811M1408 865Q1413 866 1420 869M1278 829Q1272 830 1268 830M1273 835Q1268 839 1263 841M1327 812Q1333 810 1336 810M1322 818Q1325 821 1331 822M1207 878Q1204 882 1197 884M1212 866Q1203 867 1197 870M1330 787Q1336 787 1345 788M1358 794Q1360 797 1363 798M1397 814Q1400 820 1407 825M1367 811Q1370 814 1376 817M1241 882Q1238 884 1239 889M1235 849Q1229 854 1222 857M1252 828Q1246 834 1240 835M1265 866Q1268 873 1268 879M1405 844Q1409 846 1411 847M1235 844Q1230 846 1229 848M1207 893Q1201 894 1199 894M1333 813Q1339 817 1342 816M1309 805Q1311 805 1315 807" stroke="#e6d3ba" stroke-width="1.3" fill="none" opacity=".75"/>
<path d="M1418 846Q1419 851 1423 855M1393 823Q1395 827 1398 829M1369 816Q1373 819 1378 824M1232 831Q1224 833 1216 833M1218 856Q1212 859 1203 860M1219 870Q1213 870 1205 871M1414 826Q1416 831 1418 833M1411 834Q1413 837 1417 841M1399 813Q1402 815 1404 818M1221 911Q1220 915 1220 918M1255 876Q1255 879 1255 886M1256 884Q1254 890 1253 899M1257 882Q1259 885 1258 889M1230 836Q1226 838 1224 838M1336 801Q1341 804 1344 804M1407 868Q1412 869 1418 866M1396 837Q1401 843 1406 847M1350 812Q1354 817 1360 820M1417 857Q1425 862 1432 863M1211 910Q1205 913 1201 915M1381 835Q1385 841 1392 843M1309 817Q1315 818 1319 819M1385 810Q1389 812 1391 816M1419 841Q1421 845 1423 849M1287 831Q1287 835 1287 841M1391 856Q1395 859 1402 861M1215 857Q1210 858 1209 858M1384 853Q1388 857 1393 857M1420 837Q1424 844 1425 849M1328 801Q1332 804 1334 803M1372 794Q1377 798 1379 801M1222 896Q1217 897 1212 901M1365 795Q1371 800 1373 802M1370 813Q1373 819 1379 820M1262 808Q1259 809 1252 810M1223 875Q1218 877 1215 877M1293 826Q1292 830 1293 833M1279 828Q1276 829 1273 830M1344 797Q1349 799 1351 803M1399 806Q1399 808 1403 812M1425 872Q1431 867 1434 862M1430 864Q1436 865 1440 864M1257 823Q1252 826 1250 826M1341 786Q1346 790 1353 794M1257 873Q1256 879 1255 883M1381 814Q1385 819 1391 821M1380 834Q1383 838 1389 841M1388 852Q1396 854 1402 856M1242 889Q1242 895 1244 901M1257 848Q1251 849 1246 854M1390 813Q1392 815 1397 819M1341 792Q1343 794 1347 797M1287 810Q1284 812 1281 811M1294 822Q1292 827 1294 828M1376 812Q1380 815 1386 819M1287 827Q1284 833 1284 839M1251 845Q1249 848 1242 850M1372 818Q1377 819 1378 822M1343 784Q1347 786 1351 791M1262 882Q1261 884 1262 889M1272 874Q1271 879 1270 882M1313 826Q1315 827 1319 826M1238 867Q1232 868 1227 871M1260 880Q1262 886 1261 890M1230 833Q1225 832 1222 835M1232 876Q1226 880 1221 881M1212 880Q1208 882 1206 883M1408 848Q1414 849 1421 854M1253 837Q1248 839 1245 839M1292 812Q1292 816 1291 824M1236 846Q1229 847 1223 847M1318 813Q1325 817 1329 818M1426 865Q1431 864 1433 862M1286 823Q1287 827 1287 831M1224 906Q1224 911 1226 915M1287 845Q1288 853 1288 858M1328 796Q1332 796 1336 799M1387 815Q1388 817 1391 819M1225 899Q1218 902 1211 907M1227 909Q1228 916 1228 920M1214 887Q1209 892 1203 893M1410 846Q1414 847 1420 846M1398 833Q1402 837 1405 840M1365 831Q1370 836 1376 839M1232 848Q1227 850 1224 852M1226 912Q1228 913 1226 918M1215 873Q1212 877 1209 877M1247 879Q1246 884 1248 890M1234 880Q1229 881 1226 881M1274 806Q1269 809 1264 811M1321 802Q1326 804 1333 803M1403 845Q1413 845 1418 848M1377 810Q1381 812 1384 814M1312 806Q1314 804 1321 804M1289 846Q1288 852 1288 855M1310 827Q1316 830 1318 830M1421 852Q1424 852 1427 855M1220 892Q1215 894 1208 898M1245 877Q1244 884 1242 893M1214 901Q1209 903 1200 904M1292 829Q1294 832 1294 837M1265 806Q1261 807 1253 809M1407 855Q1412 856 1420 859M1258 826Q1255 828 1252 829M1298 813Q1296 820 1298 829M1273 811Q1267 811 1262 813M1370 843Q1375 843 1380 845M1357 812Q1363 815 1366 819M1401 835Q1407 840 1411 844M1260 879Q1262 883 1260 890M1319 803Q1327 804 1333 807M1301 800Q1306 804 1311 803M1252 846Q1249 849 1243 851M1362 804Q1367 809 1373 812M1402 856Q1403 857 1408 858M1403 846Q1409 849 1411 850M1294 851Q1294 857 1294 862M1269 807Q1262 809 1254 809M1227 859Q1222 860 1216 860M1217 887Q1211 888 1203 893M1391 800Q1392 802 1396 804M1277 816Q1274 817 1269 818M1257 821Q1252 822 1244 823M1374 791Q1375 793 1378 796M1212 896Q1207 895 1206 899M1245 835Q1236 838 1231 837M1408 831Q1414 837 1417 843M1234 837Q1232 836 1227 839M1267 825Q1263 828 1260 827M1263 831Q1261 831 1255 833M1301 824Q1307 825 1310 825M1328 798Q1334 798 1341 801M1215 875Q1211 875 1206 879M1321 800Q1330 800 1336 803M1276 804Q1269 805 1263 806M1238 854Q1234 857 1228 858M1331 793Q1333 796 1337 797M1360 838Q1364 838 1368 841M1238 896Q1238 901 1236 903M1314 798Q1318 799 1322 798M1255 881Q1254 884 1254 888M1322 787Q1327 789 1331 787M1411 830Q1413 833 1418 839M1254 883Q1252 888 1251 896M1424 854Q1428 850 1434 849M1255 814Q1249 816 1243 818M1258 890Q1256 896 1256 899M1375 848Q1382 853 1389 856M1366 831Q1371 834 1372 835M1295 814Q1296 819 1296 822M1359 788Q1365 794 1370 799M1328 789Q1334 791 1337 790M1231 885Q1225 885 1216 887M1252 822Q1249 825 1244 825M1222 861Q1220 862 1216 865M1288 807Q1282 813 1275 815M1328 794Q1335 792 1340 793M1256 876Q1254 881 1253 889M1411 830Q1414 832 1419 835M1367 838Q1372 840 1374 839M1314 796Q1316 797 1321 798M1337 789Q1339 792 1342 793M1408 857Q1414 857 1417 856M1352 787Q1357 792 1360 793M1379 819Q1384 821 1386 825M1340 816Q1342 816 1348 820M1386 800Q1388 805 1391 807M1278 833Q1278 839 1277 842M1288 841Q1287 847 1286 852" stroke="#2e1e14" stroke-width="1.1" fill="none" opacity=".55"/>
</g>
<path d="M1216 917L1209 920M1214 915L1205 919M1212 912L1203 917M1210 909L1202 913M1209 907L1202 912M1207 904L1201 905M1205 901L1201 905M1204 901L1196 900M1205 898L1199 897M1205 895L1197 891M1206 892L1199 890M1207 889L1198 889M1207 886L1197 884M1208 883L1200 881M1209 880L1199 879M1210 877L1205 878M1210 874L1203 871M1211 871L1202 868M1212 868L1207 867M1212 866L1207 862M1213 863L1205 861M1213 861L1204 856M1215 858L1208 853M1217 855L1212 849M1219 853L1214 847M1221 850L1213 845M1223 848L1217 844M1225 845L1220 843M1226 842L1220 838M1228 840L1221 833M1230 837L1223 832M1232 835L1227 830M1234 832L1230 827M1236 829L1227 826M1237 827L1232 822M1239 826L1237 820M1242 824L1240 819M1244 822L1242 816M1247 820L1241 815M1250 819L1244 815M1252 817L1251 814M1255 815L1249 807M1257 813L1254 809M1260 811L1254 803M1262 810L1257 802M1265 808L1262 800M1268 806L1265 802M1270 804L1268 798M1272 803L1270 797M1275 802L1271 793M1278 801L1274 795M1281 800L1280 793M1284 799L1281 794M1287 797L1284 789M1290 796L1289 790M1292 795L1288 789M1295 794L1293 786M1298 793L1298 785M1301 792L1299 784M1304 791L1302 782M1307 790L1304 783M1309 789L1307 782M1312 789L1313 781M1315 789L1316 781M1318 789L1316 780M1321 788L1322 781M1324 788L1323 783M1328 788L1326 782M1331 788L1330 779M1334 788L1333 781M1337 788L1338 783M1340 788L1341 780M1343 787L1342 781M1346 787L1344 778M1349 787L1347 783M1351 787L1353 779M1354 788L1356 781M1357 789L1358 780M1360 789L1361 782M1363 790L1364 780M1366 791L1367 782M1369 792L1372 783M1372 793L1373 787M1375 794L1379 787M1378 795L1382 788M1381 795L1385 785M1384 796L1385 791M1387 797L1388 792M1390 798L1391 791M1392 798L1397 793M1394 800L1398 795M1396 802L1399 798M1399 804L1403 801M1401 807L1405 802M1403 809L1408 805M1405 811L1412 803M1407 813L1412 806M1410 815L1414 811M1412 817L1417 813M1413 818L1419 816M1414 821L1419 817M1414 824L1421 821M1415 827L1419 827M1415 830L1425 828M1416 833L1424 830M1416 836L1423 834M1417 839L1423 837M1417 842L1426 841M1418 846L1424 842M1420 849L1427 847M1421 852L1430 847M1423 855L1428 853M1425 857L1429 855M1426 860L1432 857M1428 863L1433 857M1429 866L1437 860M1431 868L1434 866M1432 871L1439 866M1434 874L1440 871M1439 872L1439 882M1436 871L1432 879M1433 871L1431 878M1430 870L1428 880M1427 870L1423 878M1424 869L1423 879M1421 868L1420 876M1418 868L1417 877M1415 867L1412 874M1412 866L1409 875M1409 866L1406 871M1404 871L1406 867M1401 869L1406 861M1398 868L1400 863M1396 866L1399 861M1393 865L1398 860M1390 864L1393 855M1388 862L1391 853M1385 861L1387 856M1382 859L1384 855M1380 858L1382 852M1377 856L1380 847M1374 855L1375 850M1371 853L1377 848M1369 851L1372 846M1367 849L1370 843M1364 847L1371 841M1362 845L1367 841M1360 842L1363 838M1358 840L1360 834M1356 838L1363 832M1354 836L1360 829M1351 834L1358 830M1349 832L1353 828M1347 829L1353 824M1345 827L1351 821M1344 826L1345 820M1341 825L1343 818M1338 824L1340 817M1335 823L1338 819M1331 822L1333 814M1328 821L1329 816M1328 819L1325 813M1326 821L1322 816M1324 823L1317 818M1322 826L1319 823M1319 828L1315 820M1317 830L1313 824M1315 832L1311 827M1313 834L1307 829M1311 837L1303 833M1309 839L1304 833M1307 842L1302 835M1305 844L1300 839M1303 846L1297 840M1301 849L1296 844M1299 851L1294 846M1297 854L1292 851M1294 856L1287 851M1292 859L1287 852M1290 861L1285 856M1288 863L1282 856M1286 866L1282 860M1284 868L1278 863M1282 870L1276 868M1280 873L1275 868M1278 875L1272 871M1276 877L1274 874M1274 879L1269 877M1272 882L1268 879M1270 884L1263 879M1268 886L1264 880M1266 889L1261 886M1260 887L1262 891M1258 888L1264 895M1255 890L1259 896M1253 892L1256 896M1250 894L1254 897M1248 896L1252 899M1245 898L1251 903M1242 900L1245 906M1240 902L1246 909M1237 903L1241 910M1235 905L1237 911M1232 907L1238 913M1230 909L1231 914M1227 911L1231 916M1225 913L1229 920M1223 914L1223 922M1220 915L1221 925M1216 915L1215 920" stroke="#6a4a36" stroke-width="1" fill="none" opacity=".8"/>
<path d="M1176 972 L1298 800" stroke="#3a281c" stroke-width="4" fill="none" stroke-linecap="round"/>
<path d="M1176 972 L1298 800" stroke="#efe2cc" stroke-width="2" fill="none" stroke-linecap="round"/>
<path d="M1168 988 L1172 972 Q1176 968 1181 970 Z" fill="#3a281c" stroke="#3a281c" stroke-width="1.5"/>
</svg>
</div>

<div id="taskbar">
  <svg class="abs" style="left:16px;top:12px" width="17" height="17" viewBox="0 0 17 17"><path d="M0 2.3L7 1.3V8H0ZM8 1.1L17 0V8H8ZM0 9H7V15.7L0 14.7ZM8 9H17V17L8 15.9Z" fill="#fff"/></svg>
  <div class="abs" style="left:48px;top:0;width:288px;height:40px;background:#f2f2f2;border:1px solid #d8d8d8"></div>
  <svg class="abs" style="left:59px;top:1052px;top:12px" width="18" height="18" viewBox="0 0 18 18"><circle cx="11" cy="7" r="5.2" stroke="#222" stroke-width="1.3" fill="none"/><path d="M7.3 10.7L1 17" stroke="#222" stroke-width="1.4"/></svg>
  <div class="t" style="left:88px;top:11px;font-size:15px;color:#222">Buscar</div>
  <svg class="abs" style="left:273px;top:3px" width="46" height="36" viewBox="0 0 46 36"><ellipse cx="23" cy="30" rx="21" ry="5" fill="#c9dbe8"/><path d="M7 14H39V29Q23 34 7 29Z" fill="#f3efe6"/><path d="M7 20Q11 23 15 20Q19 23 23 20Q27 23 31 20Q35 23 39 20" stroke="#e05a4a" stroke-width="1.5" fill="none"/><path d="M10 6H36V16Q23 20 10 16Z" fill="#f6f1e6"/><path d="M10 12Q14 14 18 12Q22 14 26 12Q30 14 36 12" stroke="#8ecfd6" stroke-width="1.5" fill="none"/><circle cx="14" cy="6" r="2.5" fill="#c0303a"/><circle cx="23" cy="4" r="2.5" fill="#c0303a"/><circle cx="32" cy="6" r="2.5" fill="#c0303a"/></svg>
  <!-- task view -->
  <svg class="abs" style="left:351px;top:11px" width="19" height="18" viewBox="0 0 19 18"><rect x="3" y="4" width="11" height="10" stroke="#fff" stroke-width="1.3" fill="none"/><path d="M1 1H16M1 17H16M17 3V6M17 8V11M17 13V15" stroke="#fff" stroke-width="1.3"/></svg>
  <!-- store -->
  <svg class="abs" style="left:398px;top:8px" width="24" height="24" viewBox="0 0 24 24"><path d="M8 5V3Q12 0 16 3V5" stroke="#58a8e8" stroke-width="1.6" fill="none"/><rect x="1" y="5" width="22" height="18" rx="3" fill="#e9f3fb"/><rect x="6.5" y="9" width="5" height="5" fill="#f25022"/><rect x="12.5" y="9" width="5" height="5" fill="#7fba00"/><rect x="6.5" y="15" width="5" height="5" fill="#00a4ef"/><rect x="12.5" y="15" width="5" height="5" fill="#ffb900"/></svg>
  <!-- edge -->
  <svg class="abs" style="left:447px;top:8px" width="24" height="24" viewBox="0 0 24 24"><circle cx="12" cy="12" r="11.5" fill="#1b8fd9"/><path d="M1 13Q2 3 12 1Q21 1 23 10Q23 14 17 14H9Q9 18 14 19Q18 19 21 17Q18 23 11 23Q2 22 1 13Z" fill="#2fb47c"/><path d="M1 12Q3 4 12 1Q22 1 23 11Q23 14 19 14H9Q9 9 14 8Q9 4 4 9Z" fill="#0c67c8"/></svg>
  <!-- explorer -->
  <svg class="abs" style="left:497px;top:9px" width="23" height="21" viewBox="0 0 23 21"><path d="M0 1H9L11 4H23V20H0Z" fill="#f0b63a"/><rect x="0" y="6" width="23" height="14" fill="#ffd764"/><rect x="6" y="11" width="11" height="4" fill="#3b8de0"/></svg>
  <!-- mail -->
  <svg class="abs" style="left:545px;top:9px" width="30" height="30" viewBox="0 0 30 30"><rect x="1" y="4" width="24" height="17" fill="#1d8de0"/><path d="M1 4L13 13L25 4" stroke="#c9e6ff" stroke-width="1.5" fill="none"/><circle cx="21" cy="20" r="8" fill="#2b2b2b" stroke="#888" stroke-width="1"/><text x="15.5" y="24.5" font-size="10" fill="#fff" font-family="Liberation Sans" font-weight="bold">67</text></svg>
  <!-- chrome active -->
  <div class="abs" style="left:583px;top:0;width:48px;height:40px;background:#383838"></div>
  <div class="abs" style="left:583px;top:38px;width:48px;height:2px;background:#8fbbe8"></div>
  <svg class="abs" style="left:595px;top:8px" width="25" height="25" viewBox="0 0 24 24"><circle cx="12" cy="12" r="11.5" fill="#db4437"/><path d="M12 12L2 6.3A11.5 11.5 0 0 0 8 22.7Z" fill="#0f9d58"/><path d="M12 12L8 22.7A11.5 11.5 0 0 0 22.5 7.5Z" fill="#ffcd40"/><circle cx="12" cy="12" r="5" fill="#fff"/><circle cx="12" cy="12" r="4" fill="#4285f4"/><ellipse cx="16" cy="17" rx="7" ry="5" fill="#f4f4f4"/><path d="M11 17H21" stroke="#3c6ca8" stroke-width="1.5"/></svg>
  <!-- green app -->
  <svg class="abs" style="left:644px;top:8px" width="25" height="25" viewBox="0 0 25 25"><rect width="25" height="25" rx="6" fill="#53e3b9"/><rect x="6" y="9" width="13" height="10" rx="3" fill="#1a1a1a"/><rect x="10" y="12" width="2" height="4" fill="#53e3b9"/><rect x="14" y="12" width="2" height="4" fill="#53e3b9"/><path d="M6 9Q7 5 10 4" stroke="#1a1a1a" stroke-width="2" fill="none"/></svg>
  <!-- img app -->
  <div class="abs" style="left:693px;top:8px;width:25px;height:24px;background:#0a0a3a"></div>
  <div class="abs" style="left:697px;top:11px;width:17px;height:12px;background:linear-gradient(135deg,#c8c0a8,#7a8070)"></div>
  <!-- purple app -->
  <svg class="abs" style="left:742px;top:8px" width="28" height="28" viewBox="0 0 28 28"><rect width="24" height="24" rx="6" fill="#8a4ef0"/><circle cx="12" cy="12" r="7" stroke="#f0e0ff" stroke-width="2" fill="none"/><rect x="13" y="13" width="14" height="14" rx="4" fill="#e8334a"/><rect x="17.5" y="17.5" width="5" height="5" fill="#fff"/></svg>
  <div class="abs" style="left:734px;top:38px;width:40px;height:2px;background:#8fbbe8"></div>
  <!-- discord -->
  <svg class="abs" style="left:791px;top:8px" width="24" height="24" viewBox="0 0 24 24"><circle cx="12" cy="12" r="12" fill="#5865f2"/><path d="M6 8Q9 6 12 6.5Q15 6 18 8Q20 12 19 16Q17 17.5 15.5 17.5L14.5 16Q12 16.6 9.5 16L8.5 17.5Q7 17.5 5 16Q4 12 6 8Z" fill="#fff"/><circle cx="9.5" cy="12" r="1.4" fill="#5865f2"/><circle cx="14.5" cy="12" r="1.4" fill="#5865f2"/></svg>
  <!-- headphones app -->
  <svg class="abs" style="left:839px;top:9px" width="26" height="24" viewBox="0 0 26 24"><path d="M3 16V12Q3 3 13 3Q23 3 23 12V16" stroke="#1c2fb8" stroke-width="3" fill="none"/><rect x="1" y="13" width="4" height="8" fill="#2040d0"/><rect x="21" y="13" width="4" height="8" fill="#2040d0"/><ellipse cx="13" cy="15" rx="6" ry="6" fill="#f0a020"/><rect x="7" y="14" width="12" height="2.5" fill="#d02020"/></svg>
  <!-- obs -->
  <svg class="abs" style="left:888px;top:8px" width="24" height="24" viewBox="0 0 24 24"><circle cx="12" cy="12" r="11" stroke="#d8d8d8" stroke-width="1.6" fill="#2a2a2a"/><circle cx="12" cy="7" r="3.2" fill="#d8d8d8"/><circle cx="7.5" cy="15" r="3.2" fill="#d8d8d8"/><circle cx="16.5" cy="15" r="3.2" fill="#d8d8d8"/></svg>
  <!-- filmora-like -->
  <svg class="abs" style="left:937px;top:7px" width="25" height="27" viewBox="0 0 25 27"><rect width="25" height="22" fill="#14333f"/><path d="M6 5L16 13L12 16Z" fill="#3fd0c8"/><rect x="5" y="20" width="15" height="5" rx="2" fill="#fff"/></svg>
  <!-- whatsapp -->
  <svg class="abs" style="left:986px;top:8px" width="25" height="25" viewBox="0 0 24 24"><path d="M12 1.5A10.5 10.5 0 0 0 3 17.5L1.5 22.5L6.7 21A10.5 10.5 0 1 0 12 1.5Z" fill="#25d366" stroke="#25d366"/><path d="M12 3.3A8.7 8.7 0 0 0 4.6 16.8L3.8 20L7 19.2A8.7 8.7 0 1 0 12 3.3Z" fill="#1d1d1d"/><path d="M8.5 7.5Q9.5 7 10 8L10.7 9.8Q10.5 10.5 10 11Q11 13.2 13.2 14.2Q13.8 13.6 14.3 13.4L16.2 14.2Q16.6 15.3 15.8 16Q14.5 17 12 16Q8.5 14.5 7.5 11Q7.2 8.8 8.5 7.5Z" fill="#25d366"/></svg>
  <!-- pokeball -->
  <svg class="abs" style="left:1036px;top:8px" width="24" height="24" viewBox="0 0 24 24"><circle cx="12" cy="12" r="10.5" stroke="#e0e0e0" stroke-width="1.7" fill="none"/><path d="M1.5 12H8.5M15.5 12H22.5" stroke="#e0e0e0" stroke-width="1.7"/><circle cx="12" cy="12" r="3.2" stroke="#e0e0e0" stroke-width="1.7" fill="none"/></svg>
  <!-- xbox -->
  <svg class="abs" style="left:1085px;top:8px" width="25" height="25" viewBox="0 0 25 25"><rect width="25" height="25" fill="#107c10"/><circle cx="12.5" cy="12.5" r="9" fill="#fff"/><path d="M6 6Q12.5 11 19 19M19 6Q12.5 11 6 19" stroke="#107c10" stroke-width="2.6" fill="none"/></svg>
  <!-- word -->
  <svg class="abs" style="left:1133px;top:8px" width="26" height="25" viewBox="0 0 26 25"><rect x="8" y="1" width="18" height="23" rx="2" fill="#41a5ee"/><rect x="8" y="9" width="18" height="8" fill="#2b7cd3"/><rect x="8" y="17" width="18" height="7" fill="#185abd"/><rect x="0" y="5" width="14" height="15" rx="1.5" fill="#1a5cb8"/><text x="1.5" y="17" font-size="11" fill="#fff" font-family="Liberation Sans" font-weight="bold">W</text></svg>
  <!-- firefox -->
  <svg class="abs" style="left:1183px;top:7px" width="25" height="26" viewBox="0 0 25 26"><circle cx="12.5" cy="14" r="11" fill="#ff7139"/><path d="M3 10Q5 3 12 2Q8 6 12 8Q18 6 20 2Q25 8 23 15Q20 8 14 10Z" fill="#ffbd4f"/><circle cx="12.5" cy="15" r="5" fill="#9059ff"/><path d="M3 13Q4 22 12.5 24Q21 23 23 15Q20 21 13 21Q6 20 3 13Z" fill="#e31587" opacity=".85"/></svg>
  <!-- right tray -->
  <svg class="abs" style="left:1446px;top:8px" width="28" height="26" viewBox="0 0 28 26"><circle cx="12" cy="10" r="6" fill="#f8c030"/><path d="M4 24Q0 24 1 19Q2 15 6 16Q8 11 14 12Q20 13 20 18Q25 18 24 22Q23 24 20 24Z" fill="#a8d0f0"/><circle cx="20" cy="6" r="5.5" fill="#d8352a"/><text x="18" y="9.5" font-size="8" fill="#fff" font-family="Liberation Sans" font-weight="bold">1</text></svg>
  <div class="t" style="left:1481px;top:11px;font-size:14.5px;color:#fff">22°C</div>
  <div class="t" style="left:1519px;top:11px;font-size:13.8px;color:#fff">Mayorm. nubla...</div>
  <svg class="abs" style="left:1646px;top:15px" width="12" height="8" viewBox="0 0 12 8"><path d="M1 7L6 2L11 7" stroke="#fff" stroke-width="1.4" fill="none"/></svg>
  <svg class="abs" style="left:1670px;top:11px" width="14" height="18" viewBox="0 0 14 18"><rect x="1" y="5" width="8" height="8" rx="1.5" stroke="#fff" stroke-width="1.3" fill="none"/><path d="M9 8L12 6V12L9 10M3 2Q5 0 8 2M3 16Q5 18 8 16" stroke="#fff" stroke-width="1.2" fill="none"/></svg>
  <svg class="abs" style="left:1694px;top:10px" width="12" height="20" viewBox="0 0 12 20"><rect x="3" y="1" width="6" height="11" rx="3" fill="#fff"/><path d="M1 9Q1 15 6 15Q11 15 11 9M6 15V19M3 19H9" stroke="#fff" stroke-width="1.3" fill="none"/></svg>
  <svg class="abs" style="left:1714px;top:11px" width="20" height="18" viewBox="0 0 20 18"><rect x="4" y="2" width="15" height="10" stroke="#fff" stroke-width="1.3" fill="none"/><path d="M9 12V15M6 15H13M1 6V15H4" stroke="#fff" stroke-width="1.3" fill="none"/></svg>
  <svg class="abs" style="left:1739px;top:11px" width="18" height="18" viewBox="0 0 18 18"><path d="M1 6H4L8 2V16L4 12H1Z" stroke="#fff" stroke-width="1.2" fill="none"/><path d="M11 6Q13 9 11 12M13.5 4Q17 9 13.5 14" stroke="#fff" stroke-width="1.2" fill="none"/></svg>
  <div class="t" style="left:1767px;top:12px;font-size:13px;color:#fff">ESP</div>
  <div class="t" style="left:1816px;top:3px;font-size:12.3px;color:#fff">20:44</div>
  <div class="t" style="left:1803px;top:21px;font-size:11.9px;color:#fff">20/02/2024</div>
  <svg class="abs" style="left:1876px;top:9px" width="30" height="30" viewBox="0 0 30 30"><path d="M2 2H20V15H8L4 19V15H2Z" stroke="#fff" stroke-width="1.3" fill="none"/><path d="M5 6H17M5 9H17M5 12H13" stroke="#fff" stroke-width="1.2"/><circle cx="17" cy="20" r="8" fill="#1f2023" stroke="#aaa" stroke-width="1"/><text x="11.5" y="24.5" font-size="11" fill="#fff" font-family="Liberation Sans">10</text></svg>
</div>

</body></html>
